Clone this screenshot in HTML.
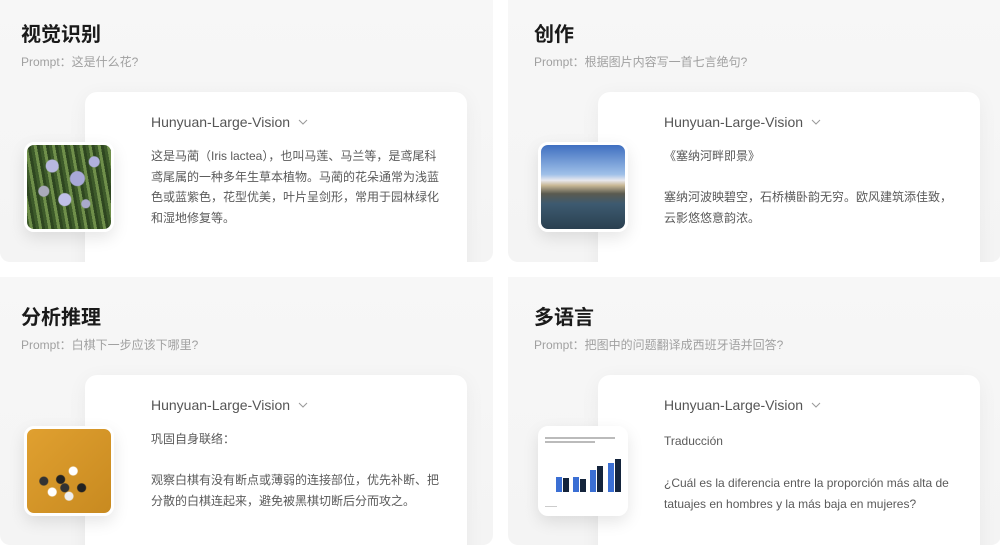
<!DOCTYPE html><html><head><meta charset="utf-8"><style>
body{margin:0;width:1000px;height:556px;background:#fff;position:relative;overflow:hidden;font-family:"Liberation Sans","Noto Sans CJK SC",sans-serif}
.p{position:absolute;width:493px;background:linear-gradient(#f7f7f7,#f4f4f4);overflow:hidden;border-radius:0 0 10px 10px}
.t{position:absolute;left:21px;top:18px;font-size:20px;font-weight:bold;color:#1a1a1a}
.pr{position:absolute;left:21px;top:53px;font-size:12px;color:#a0a0a0}
.c{position:absolute;left:85px;top:92px;width:382px;height:200px;background:#fff;border-radius:12px;box-shadow:0 4px 20px rgba(0,0,0,.05)}
.m{position:absolute;left:66px;top:22px;font-size:14px;color:#555}
.m svg{margin-left:8px;vertical-align:2px}
.x{position:absolute;left:66px;top:54px;width:290px;font-size:12px;line-height:20.5px;color:#5a5a5a}
.im{position:absolute;left:24px;top:142px;width:90px;height:90px;border-radius:10px;border:3px solid #fff;box-sizing:border-box;box-shadow:0 6px 16px rgba(0,0,0,.1);overflow:hidden}
</style></head><body>
<div class="p" style="left:0;top:0;height:262px">
<div class="t">视觉识别</div><div class="pr">Prompt：这是什么花?</div>
<div class="c"><div class="m">Hunyuan-Large-Vision<svg width="10" height="6"><path d="M1 1l4 4 4-4" fill="none" stroke="#999"/></svg></div><div class="x">这是马蔺（Iris lactea），也叫马莲、马兰等，是鸢尾科鸢尾属的一种多年生草本植物。马蔺的花朵通常为浅蓝色或蓝紫色，花型优美，叶片呈剑形，常用于园林绿化和湿地修复等。</div></div>
<div class="im" style="background:repeating-linear-gradient(80deg,#3d5a2a 0 3px,#6f8f4a 3px 6px,#2e4620 6px 9px)"><div style="position:absolute;inset:0;background:radial-gradient(circle at 30% 25%,#b8b8e0 0 6px,transparent 7px),radial-gradient(circle at 60% 40%,#a8a8d8 0 7px,transparent 8px),radial-gradient(circle at 45% 65%,#c0c0e8 0 6px,transparent 7px),radial-gradient(circle at 80% 20%,#b0b0dd 0 5px,transparent 6px),radial-gradient(circle at 20% 55%,#aab 0 5px,transparent 6px),radial-gradient(circle at 70% 70%,#aac 0 4px,transparent 5px)"></div></div>
</div>
<div class="p" style="left:508px;top:0;height:262px">
<div class="t" style="left:26px">创作</div><div class="pr" style="left:26px">Prompt：根据图片内容写一首七言绝句?</div>
<div class="c" style="left:90px"><div class="m">Hunyuan-Large-Vision<svg width="10" height="6"><path d="M1 1l4 4 4-4" fill="none" stroke="#999"/></svg></div><div class="x">《塞纳河畔即景》<br><br>塞纳河波映碧空，石桥横卧韵无穷。欧风建筑添佳致，云影悠悠意韵浓。</div></div>
<div class="im" style="left:30px;background:linear-gradient(#3f6fc0 0,#9fc0e8 35%,#e8e8ee 42%,#c9b896 48%,#5a5a50 58%,#3d5a70 70%,#2a4050 100%)"></div>
</div>
<div class="p" style="left:0;top:277px;height:268px">
<div class="t" style="top:24px">分析推理</div><div class="pr" style="top:59px">Prompt：白棋下一步应该下哪里?</div>
<div class="c" style="top:98px"><div class="m">Hunyuan-Large-Vision<svg width="10" height="6"><path d="M1 1l4 4 4-4" fill="none" stroke="#999"/></svg></div><div class="x">巩固自身联络：<br><br>观察白棋有没有断点或薄弱的连接部位，优先补断、把分散的白棋连起来，避免被黑棋切断后分而攻之。</div></div>
<div class="im" style="top:149px;background:radial-gradient(circle at 40% 60%,#222 0 4px,transparent 5px),radial-gradient(circle at 55% 50%,#fff 0 4px,transparent 5px),radial-gradient(circle at 30% 75%,#fff 0 4px,transparent 5px),radial-gradient(circle at 65% 70%,#222 0 4px,transparent 5px),radial-gradient(circle at 50% 80%,#eee 0 4px,transparent 5px),radial-gradient(circle at 20% 62%,#333 0 4px,transparent 5px),radial-gradient(circle at 45% 70%,#333 0 4px,transparent 5px),linear-gradient(135deg,#e0a030,#c88a20)"></div>
</div>
<div class="p" style="left:508px;top:277px;height:268px">
<div class="t" style="left:26px;top:24px">多语言</div><div class="pr" style="left:26px;top:59px">Prompt：把图中的问题翻译成西班牙语并回答?</div>
<div class="c" style="left:90px;top:98px"><div class="m">Hunyuan-Large-Vision<svg width="10" height="6"><path d="M1 1l4 4 4-4" fill="none" stroke="#999"/></svg></div><div class="x" style="top:56px;width:300px;line-height:21px">Traducción<br><br>¿Cuál es la diferencia entre la proporción más alta de tatuajes en hombres y la más baja en mujeres?</div></div>
<div class="im" style="left:30px;top:149px;background:#fff">
<svg width="84" height="84" viewBox="0 0 84 84"><rect x="4" y="8" width="70" height="2" fill="#bbb"/><rect x="4" y="12" width="50" height="2" fill="#bbb"/><g fill="#3b6fd4"><rect x="15" y="48" width="6" height="15"/><rect x="32" y="48" width="6" height="15"/><rect x="49" y="41" width="6" height="22"/><rect x="67" y="34" width="6" height="29"/></g><g fill="#14243c"><rect x="22" y="49" width="6" height="14"/><rect x="39" y="50" width="6" height="13"/><rect x="56" y="37" width="6" height="26"/><rect x="74" y="30" width="6" height="33"/></g><rect x="4" y="77" width="12" height="1" fill="#ccc"/></svg></div>
</div>
</body></html>
